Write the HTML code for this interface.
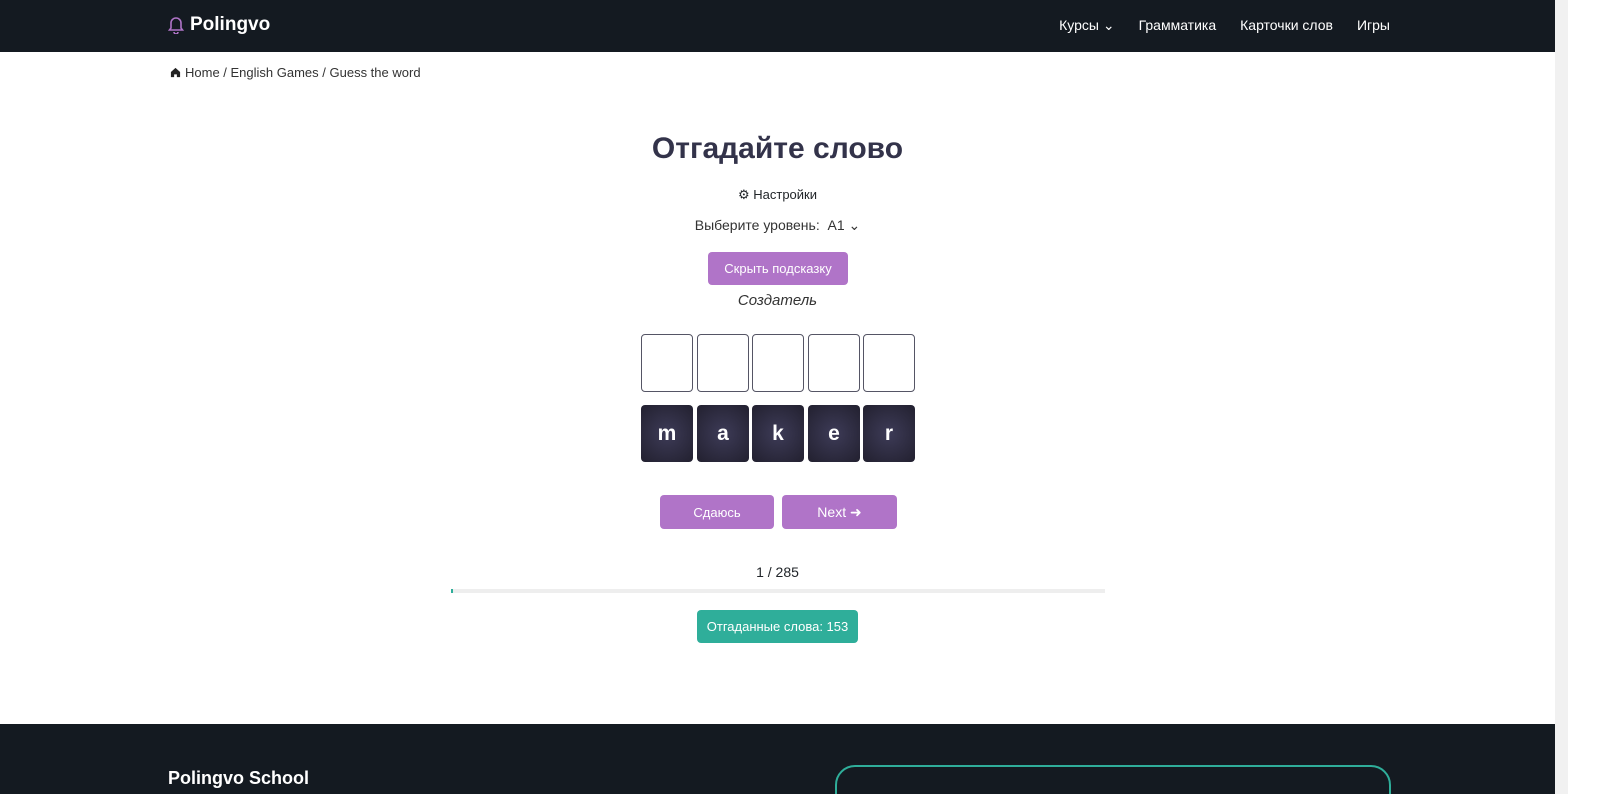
<!DOCTYPE html>
<html><head><meta charset="utf-8"><style>
*{box-sizing:border-box;margin:0;padding:0}
html{overflow:hidden;height:794px}
body{width:1600px;height:794px;overflow:hidden;background:#fff;font-family:"Liberation Sans","DejaVu Sans",sans-serif;color:#212529;position:relative}
.wrap{position:absolute;left:0;top:0;width:1555px;height:794px;overflow:hidden}
header{height:52px;background:#141a21;position:relative}
.logo{position:absolute;left:168px;top:14px;color:#fff;font-weight:bold;font-size:19px;display:flex;align-items:center;gap:6px}
nav{position:absolute;right:165px;top:17px;color:#fff;font-size:14px;display:flex;gap:24px}
.bc{position:absolute;left:170px;top:65px;font-size:13px;color:#333;display:flex;align-items:center;gap:4px}
.c{position:absolute;left:0;width:1555px;text-align:center}
h1{font-size:30px;font-weight:bold;color:#33334a}
.btn{position:absolute;background:#b074c8;color:#fff;border-radius:4px;font-size:13px;display:flex;align-items:center;justify-content:center}
.t{position:absolute;width:52px;height:58px;border:1px solid #555565;border-radius:4px;background:#fff}
.k{position:absolute;width:52px;height:57px;border-radius:4px;background:radial-gradient(circle,#3d3b57 0%,#22202f 100%);color:#fff;font-weight:bold;font-size:21px;display:flex;align-items:center;justify-content:center}
footer{position:absolute;top:724px;left:0;width:1555px;height:70px;background:#141a21;overflow:hidden}
.sb{position:absolute;left:1555px;top:0;width:13px;height:794px;background:#f1f1f1}
.th{position:absolute;left:1558px;top:10px;width:8px;height:452px;background:#c1c1c1;border-radius:4px}
</style></head><body><div class="wrap">
<header>
<div class="logo"><svg width="16" height="18" viewBox="0 0 16 18" fill="none" stroke="#b074c8" stroke-width="1.6"><path d="M3 12V7a5 5 0 0110 0v5l1.5 2h-13z"/><path d="M6 16a2 2 0 004 0"/></svg>Polingvo</div>
<nav><span>Курсы ⌄</span><span>Грамматика</span><span>Карточки слов</span><span>Игры</span></nav>
</header>
<div class="bc"><svg width="11" height="11" viewBox="0 0 12 12"><path d="M6 1L1 5.5V11h3.5V8h3v3H11V5.5z" fill="#222"/></svg>Home / English Games / Guess the word</div>
<div class="c" style="top:132px"><h1>Отгадайте слово</h1></div>
<div class="c" style="top:187px;font-size:13px">⚙ Настройки</div>
<div class="c" style="top:217px;font-size:14px;color:#333">Выберите уровень:&nbsp; A1 ⌄</div>
<div class="btn" style="left:708px;top:252px;width:140px;height:33px">Скрыть подсказку</div>
<div class="c" style="top:292px;font-size:15px;font-style:italic;color:#333">Создатель</div>
<div class="t" style="left:641px;top:334px"></div><div class="t" style="left:697px;top:334px"></div><div class="t" style="left:752px;top:334px"></div><div class="t" style="left:808px;top:334px"></div><div class="t" style="left:863px;top:334px"></div>
<div class="k" style="left:641px;top:405px">m</div><div class="k" style="left:697px;top:405px">a</div><div class="k" style="left:752px;top:405px">k</div><div class="k" style="left:808px;top:405px">e</div><div class="k" style="left:863px;top:405px">r</div>
<div class="btn" style="left:660px;top:495px;width:114px;height:34px">Сдаюсь</div>
<div class="btn" style="left:782px;top:495px;width:115px;height:34px;font-size:14px">Next ➜</div>
<div class="c" style="top:564px;font-size:14px">1 / 285</div>
<div style="position:absolute;left:451px;top:589px;width:654px;height:4px;background:#eee"><div style="width:2px;height:4px;background:#2fae9a"></div></div>
<div class="btn" style="left:697px;top:610px;width:161px;height:33px;background:#2fae9a">Отгаданные слова: 153</div>
<footer>
<div style="position:absolute;left:168px;top:44px;color:#fff;font-weight:bold;font-size:18px">Polingvo School</div>
<div style="position:absolute;left:835px;top:41px;width:556px;height:60px;border:2px solid #2fae9a;border-radius:20px"></div>
</footer>
</div><div class="sb"><div class="th"></div></div></body></html>
